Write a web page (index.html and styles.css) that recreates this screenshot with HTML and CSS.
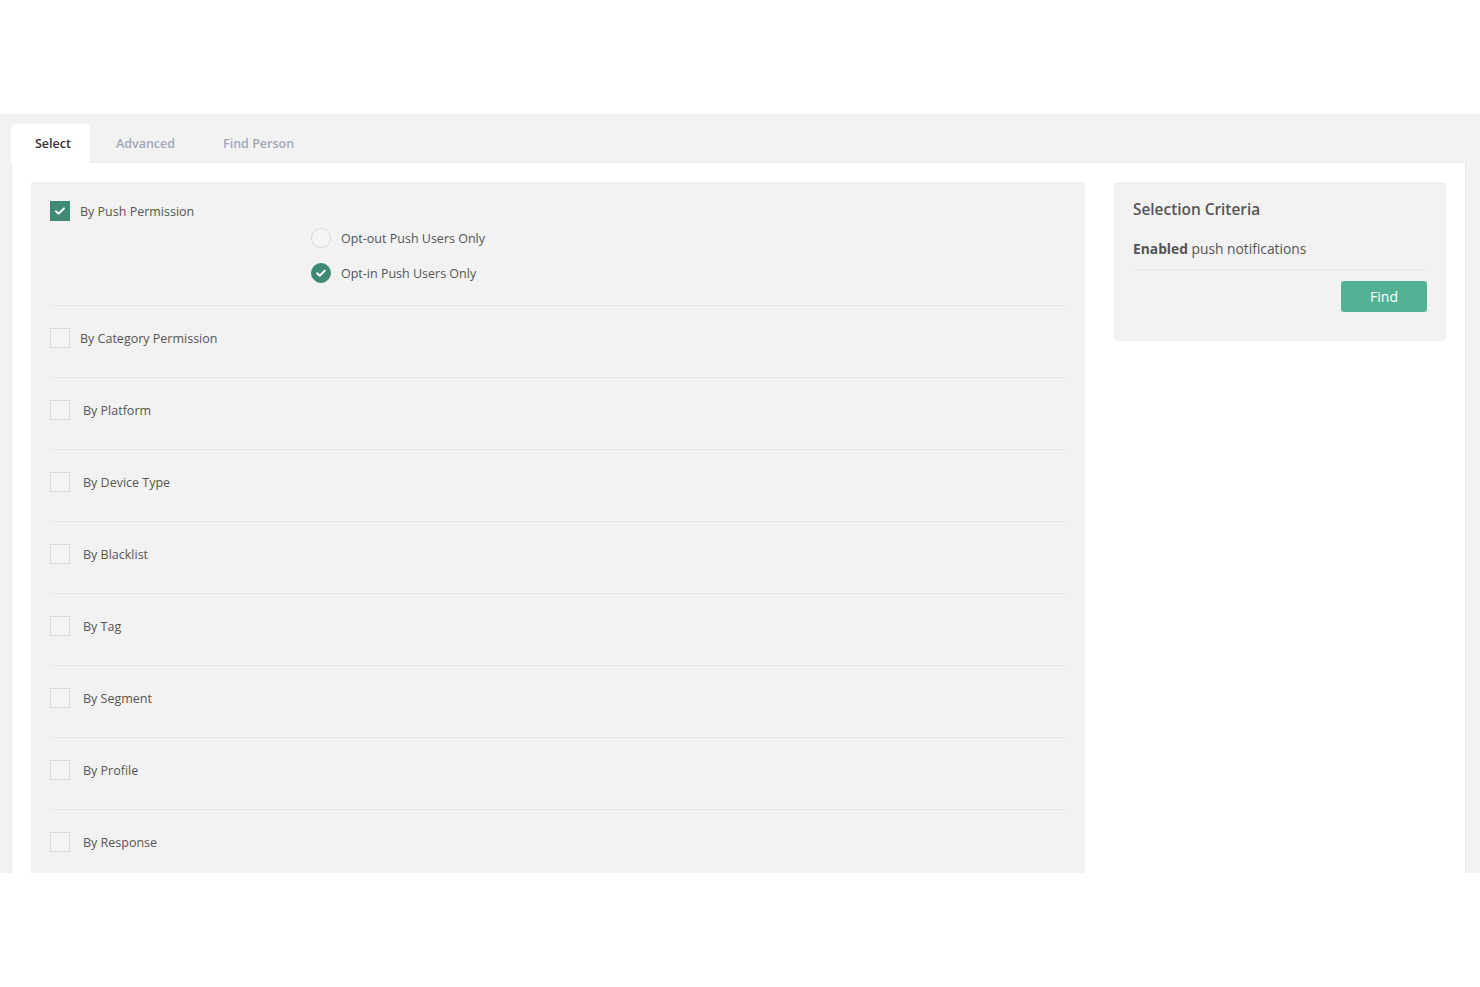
FILE: index.html
```html
<!DOCTYPE html>
<html lang="en">
<head>
    <meta charset="UTF-8">
    <title>Audience Selection</title>
    <link rel="stylesheet" href="styles.css">
</head>
<body>

<div class="top"></div>

<div class="main">
    <div class="tabs">
        <div class="tab active">Select</div>
        <div class="tab">Advanced</div>
        <div class="tab">Find Person</div>
    </div>

    <div class="panel">
        <div class="filters">
            <div class="row">
                <div class="check-line">
                    <span class="box checked">
                        <svg viewBox="0 0 20 20" width="20" height="20"><path d="M6 10.2l2.6 2.6L14 7.4" fill="none" stroke="#fff" stroke-width="2" stroke-linecap="round" stroke-linejoin="round"/></svg>
                    </span>
                    <span class="label">By Push Permission</span>
                </div>
                <div class="radios">
                    <div class="radio-line">
                        <span class="radio"></span>
                        <span class="label">Opt-out Push Users Only</span>
                    </div>
                    <div class="radio-line">
                        <span class="radio on">
                            <svg viewBox="0 0 20 20" width="20" height="20"><path d="M6.2 10.2l2.5 2.5L13.8 7.6" fill="none" stroke="#fff" stroke-width="2" stroke-linecap="round" stroke-linejoin="round"/></svg>
                        </span>
                        <span class="label">Opt-in Push Users Only</span>
                    </div>
                </div>
            </div>
            <div class="row">
                <div class="check-line"><span class="box"></span><span class="label">By Category Permission</span></div>
            </div>
            <div class="row">
                <div class="check-line wide"><span class="box"></span><span class="label">By Platform</span></div>
            </div>
            <div class="row">
                <div class="check-line wide"><span class="box"></span><span class="label">By Device Type</span></div>
            </div>
            <div class="row">
                <div class="check-line wide"><span class="box"></span><span class="label">By Blacklist</span></div>
            </div>
            <div class="row">
                <div class="check-line wide"><span class="box"></span><span class="label">By Tag</span></div>
            </div>
            <div class="row">
                <div class="check-line wide"><span class="box"></span><span class="label">By Segment</span></div>
            </div>
            <div class="row">
                <div class="check-line wide"><span class="box"></span><span class="label">By Profile</span></div>
            </div>
            <div class="row">
                <div class="check-line wide"><span class="box"></span><span class="label">By Response</span></div>
            </div>
        </div>

        <div class="criteria">
            <h2>Selection Criteria</h2>
            <div class="summary"><b>Enabled</b> push notifications</div>
            <div class="actions">
                <button class="find">Find</button>
            </div>
        </div>
    </div>
</div>

</body>
</html>
```

FILE: styles.css
```css
body {
    margin: 0;
    background-color: #fff;
    font-family: "Open Sans", "Noto Sans", sans-serif;
    font-size: 12.5px;
    color: #555;
}
.top {
    height: 114px;
}
.main {
    background-color: #f2f2f2;
    height: 759px;
    overflow: hidden;
    padding: 10px 14px 0 11px;
    box-sizing: border-box;
}
.tabs {
    display: flex;
    height: 38px;
}
.tab {
    padding: 0 22px;
    line-height: 39px;
    color: #a0a8b8;
    font-weight: 600;
    margin-right: 4px;
}
.tab.active {
    background-color: #fff;
    color: #333;
    border-radius: 3px 3px 0 0;
    position: relative;
    z-index: 1;
    margin-bottom: -1px;
    height: 39px;
    padding: 0 19px 0 24px;
}
.panel {
    background-color: #fff;
    border: 1px solid #e9e9e9;
    padding: 19px;
    display: flex;
    align-items: flex-start;
    gap: 29px;
    height: 800px;
}
.filters {
    width: 1054px;
    background-color: #f2f2f2;
    padding: 0 18px 0 19px;
    box-sizing: border-box;
    flex-shrink: 0;
}
.row {
    padding: 22px 0 29px;
    border-top: 1px dotted #dedede;
}
.row:first-child {
    border-top: none;
    padding: 19px 0 22px;
}
.check-line, .radio-line {
    display: flex;
    align-items: center;
    height: 20px;
}
.box {
    width: 20px;
    height: 20px;
    box-sizing: border-box;
    border: 1px solid #d8d8d8;
    background-color: #f4f4f4;
    margin-right: 10px;
    flex-shrink: 0;
}
.check-line.wide .box {
    margin-right: 13px;
}
.box.checked {
    background-color: #3f8a74;
    border-color: #3f8a74;
}
.box svg, .radio svg {
    display: block;
    margin: -1px;
}
.radios {
    margin: 7px 0 0 261px;
    display: flex;
    flex-direction: column;
    gap: 15px;
}
.radio {
    width: 20px;
    height: 20px;
    box-sizing: border-box;
    border-radius: 50%;
    border: 1px solid #d8d8d8;
    background-color: #f5f5f5;
    margin-right: 10px;
}
.radio.on {
    background-color: #3f8a74;
    border-color: #3f8a74;
}
.label {
    line-height: 21px;
    padding-top: 1px;
    color: #555;
}
.criteria {
    width: 332px;
    box-sizing: border-box;
    background-color: #f2f2f2;
    border-radius: 4px;
    padding: 18px 19px 29px;
}
.criteria h2 {
    margin: 0 0 18px;
    font-size: 15.4px;
    font-weight: 600;
    line-height: 20px;
    color: #555;
}
.summary {
    font-size: 13.8px;
    line-height: 21px;
    padding-bottom: 10px;
    border-bottom: 1px solid #e4e4e4;
    color: #555;
}
.summary b {
    font-weight: 700;
}
.actions {
    display: flex;
    justify-content: flex-end;
    margin-top: 11px;
}
.find {
    width: 86px;
    height: 31px;
    border: none;
    border-radius: 3px;
    background-color: #52b095;
    color: #fff;
    font-family: "Open Sans", "Noto Sans", sans-serif;
    font-size: 14px;
    cursor: pointer;
}
```
